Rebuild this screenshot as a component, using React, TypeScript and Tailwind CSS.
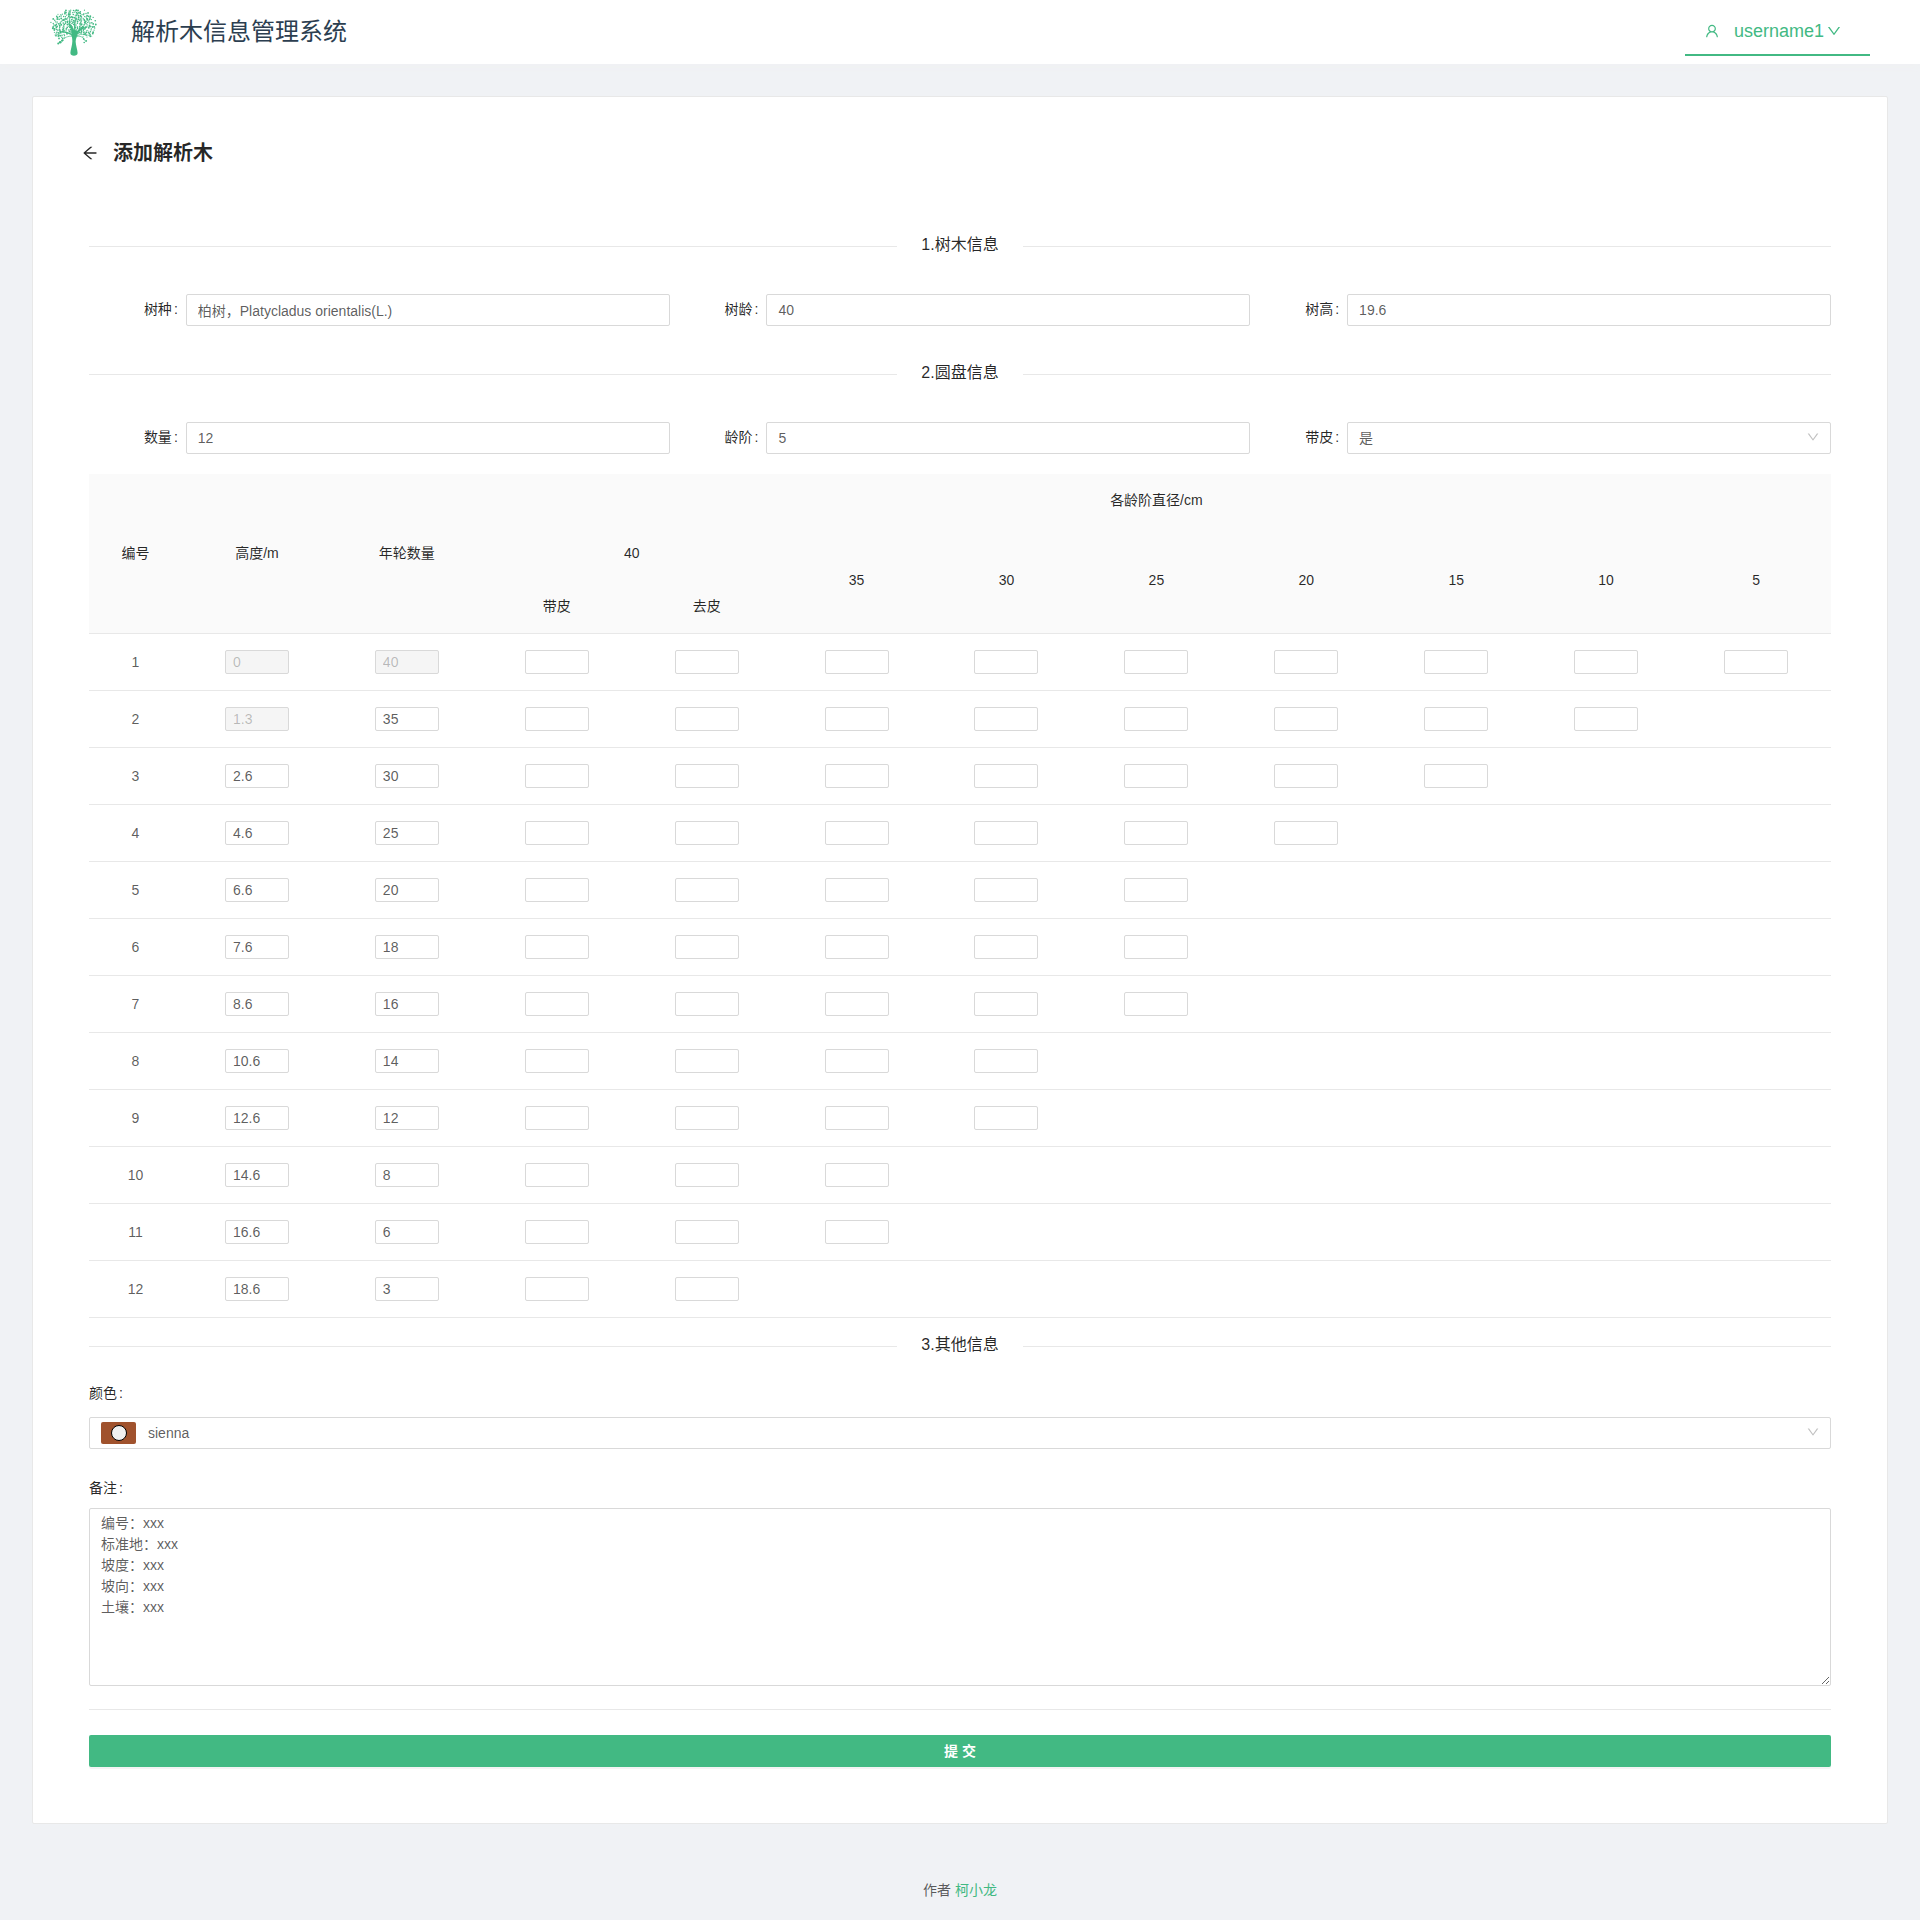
import type { ReactNode } from 'react'
import { AiOutlineArrowLeft, AiOutlineDown, AiOutlineUser } from 'react-icons/ai'

type Leaf = { x: number; y: number; r: number }

function crownLeaves(): Leaf[] {
  const leaves: Leaf[] = []
  const total = 300
  for (let i = 0; i < total; i++) {
    const t = Math.sqrt((i + 0.5) / total)
    const a = i * 2.39996
    const wobble = 1 + 0.07 * Math.sin(i * 7.3)
    const x = 101 + 67 * t * wobble * Math.cos(a)
    const y = 77 + 51 * t * wobble * Math.sin(a)
    const underCrown = y > 103 && Math.abs(x - 101) < 27
    const lowerGap = y > 116 && x > 80 && x < 122
    const outerGap = y > 112 && x > 140
    const openSky = Math.sin(x * 0.31) * Math.cos(y * 0.37) > 0.72
    if (underCrown || lowerGap || outerGap || openSky) continue
    leaves.push({ x, y, r: 1.7 + 1.1 * Math.abs(Math.sin(i * 3.7)) })
  }
  return leaves
}

const LEAVES = crownLeaves()

function TreeLogo() {
  return (
    <svg viewBox="30 22 144 146" className="h-12 w-12 text-[#42b983]" role="img" aria-label="logo">
      <g fill="currentColor">
        {LEAVES.map((l, i) => (
          <circle key={i} cx={l.x} cy={l.y} r={l.r} />
        ))}
        <circle cx="60" cy="126" r="4" />
        <circle cx="54" cy="130" r="3" />
        <circle cx="66" cy="121" r="3.5" />
        <circle cx="133" cy="127" r="2.5" />
        <circle cx="139" cy="122" r="3" />
        <path d="M94 86C92 98 97 110 97 122C97 134 91 150 91 159C91 165 96 167 102 167C108 167 113 165 113 159C113 150 107 134 107 124C107 114 113 104 116 94L104 88Z" />
      </g>
      <g fill="none" stroke="currentColor" strokeLinecap="round">
        <path strokeWidth="6" d="M101 98C98 86 94 80 88 72M106 102C114 92 120 86 130 82" />
        <path strokeWidth="4" d="M104 98C106 84 102 72 106 58M99 108C92 98 80 96 66 94" />
        <path strokeWidth="2" d="M88 72C80 64 74 60 66 58M88 72C92 60 86 50 90 38M106 58C104 48 112 42 112 34M130 82C140 76 148 82 162 78M130 82C130 72 142 64 144 54M66 94C56 92 52 86 40 84M66 94C58 98 54 104 44 104M118 90C116 76 128 66 126 50M96 108C84 106 72 112 62 124M108 110C120 104 130 110 136 122M112 106C126 98 142 104 156 108" />
      </g>
    </svg>
  )
}

function SectionDivider({ children }: { children: ReactNode }) {
  return (
    <div className="flex h-[25px] items-center gap-6 before:h-px before:flex-1 before:bg-[#e8e8e8] after:h-px after:flex-1 after:bg-[#e8e8e8]">
      <h2 className="pb-1 text-base leading-6 font-normal text-black/85">{children}</h2>
    </div>
  )
}

const CONTROL =
  'h-8 w-full rounded-[2px] border border-[#d9d9d9] bg-white px-[11px] text-sm text-black/65 outline-none focus:border-[#42b983]'

function InlineField({ id, label, children }: { id: string; label: string; children: ReactNode }) {
  return (
    <div className="grid grid-cols-[1fr_5fr] items-center">
      <label htmlFor={id} className="pr-2 pb-0.5 text-right text-sm text-black/85">
        {label}
        <span className="pl-0.5">:</span>
      </label>
      <div className="relative">{children}</div>
    </div>
  )
}

function SelectArrow() {
  return <AiOutlineDown size={14} className="pointer-events-none absolute top-2 right-[11px] text-black/25" />
}

const AGES = [35, 30, 25, 20, 15, 10, 5]

const DISC_COLUMNS = ['40带皮', '40去皮', '35', '30', '25', '20', '15', '10', '5']

const DISCS = [
  { height: '0', rings: '40', cells: 9, heightLocked: true, ringsLocked: true },
  { height: '1.3', rings: '35', cells: 8, heightLocked: true },
  { height: '2.6', rings: '30', cells: 7 },
  { height: '4.6', rings: '25', cells: 6 },
  { height: '6.6', rings: '20', cells: 5 },
  { height: '7.6', rings: '18', cells: 5 },
  { height: '8.6', rings: '16', cells: 5 },
  { height: '10.6', rings: '14', cells: 4 },
  { height: '12.6', rings: '12', cells: 4 },
  { height: '14.6', rings: '8', cells: 3 },
  { height: '16.6', rings: '6', cells: 3 },
  { height: '18.6', rings: '3', cells: 2 },
]

function CellInput({ label, value, disabled }: { label: string; value?: string; disabled?: boolean }) {
  return (
    <input
      type="text"
      aria-label={label}
      defaultValue={value}
      disabled={disabled}
      className="mx-auto block h-6 w-16 rounded-[2px] border border-[#d9d9d9] bg-white px-[7px] text-sm text-black/65 outline-none focus:border-[#42b983] disabled:bg-[#f5f5f5] disabled:text-black/25"
    />
  )
}

function DiscTable() {
  return (
    <table className="mt-5 w-full table-fixed border-separate border-spacing-0 text-center text-sm leading-[21px]">
      <colgroup>
        <col className="w-[93px]" />
        <col span={11} />
      </colgroup>
      <thead className="bg-[#fafafa] text-black/85 [&_th]:h-[53px] [&_th]:p-0 [&_th]:font-normal">
        <tr>
          <th rowSpan={3} className="border-b border-[#e8e8e8]">编号</th>
          <th rowSpan={3} className="border-b border-[#e8e8e8]">高度/m</th>
          <th rowSpan={3} className="border-b border-[#e8e8e8]">年轮数量</th>
          <th colSpan={9}>各龄阶直径/cm</th>
        </tr>
        <tr>
          <th colSpan={2}>40</th>
          {AGES.map((age) => (
            <th key={age} rowSpan={2} className="border-b border-[#e8e8e8]">
              {age}
            </th>
          ))}
        </tr>
        <tr className="h-[54px]">
          <th className="border-b border-[#e8e8e8]">带皮</th>
          <th className="border-b border-[#e8e8e8]">去皮</th>
        </tr>
      </thead>
      <tbody className="text-black/65 [&_td]:border-b [&_td]:border-[#e8e8e8] [&_td]:px-0 [&_td]:py-4">
        {DISCS.map((disc, row) => (
          <tr key={row}>
            <td>{row + 1}</td>
            <td>
              <CellInput label={`高度 ${row + 1}`} value={disc.height} disabled={disc.heightLocked} />
            </td>
            <td>
              <CellInput label={`年轮数量 ${row + 1}`} value={disc.rings} disabled={disc.ringsLocked} />
            </td>
            {DISC_COLUMNS.map((name, col) => (
              <td key={name}>{col < disc.cells && <CellInput label={`${name} ${row + 1}`} />}</td>
            ))}
          </tr>
        ))}
      </tbody>
    </table>
  )
}

export default function App() {
  return (
    <div
      lang="zh-CN"
      className="min-h-screen bg-[#f0f2f5] font-['Liberation_Sans','Noto_Sans_CJK_SC',sans-serif] text-sm leading-[21px] text-black/65"
    >
      <header className="flex h-16 items-center bg-white px-[50px] shadow-[0_2px_8px_#f0f1f2]">
        <TreeLogo />
        <h1 className="ml-[33px] text-2xl text-[#2c3e50]">解析木信息管理系统</h1>
        <button
          type="button"
          className="ml-auto flex h-12 w-[185px] items-center border-b-2 border-[#42b983] pl-[19px] text-lg text-[#42b983]"
        >
          <AiOutlineUser size={16} />
          <span className="ml-3.5">username1</span>
          <AiOutlineDown size={16} className="ml-0.5" />
        </button>
      </header>

      <main className="mx-8 mt-8 rounded-[2px] border border-[#e8e8e8] bg-white px-14 pb-14">
        <div className="-ml-2 flex h-[104px] items-center pt-2">
          <button type="button" aria-label="返回" className="text-black/85">
            <AiOutlineArrowLeft size={18} />
          </button>
          <h1 className="ml-3.5 text-xl font-semibold text-black/85">添加解析木</h1>
        </div>

        <form className="mt-[33px]" onSubmit={(e) => e.preventDefault()}>
          <SectionDivider>1.树木信息</SectionDivider>
          <div className="mt-[35px] mb-9 grid grid-cols-3">
            <InlineField id="species" label="树种">
              <input id="species" className={CONTROL} defaultValue="柏树，Platycladus orientalis(L.)" />
            </InlineField>
            <InlineField id="age" label="树龄">
              <input id="age" className={CONTROL} defaultValue="40" />
            </InlineField>
            <InlineField id="height" label="树高">
              <input id="height" className={CONTROL} defaultValue="19.6" />
            </InlineField>
          </div>

          <SectionDivider>2.圆盘信息</SectionDivider>
          <div className="mt-[35px] grid grid-cols-3">
            <InlineField id="count" label="数量">
              <input id="count" className={CONTROL} defaultValue="12" />
            </InlineField>
            <InlineField id="step" label="龄阶">
              <input id="step" className={CONTROL} defaultValue="5" />
            </InlineField>
            <InlineField id="bark" label="带皮">
              <select id="bark" className={`${CONTROL} appearance-none`} defaultValue="是">
                <option>是</option>
                <option>否</option>
              </select>
              <SelectArrow />
            </InlineField>
          </div>

          <DiscTable />

          <div className="mt-4">
            <SectionDivider>3.其他信息</SectionDivider>
          </div>

          <label htmlFor="color" className="mt-6 block text-black/85">
            颜色<span className="pl-0.5">:</span>
          </label>
          <div className="relative mt-[13px]">
            <select id="color" className={`${CONTROL} appearance-none pl-[58px]`} defaultValue="sienna">
              <option>sienna</option>
            </select>
            <span className="pointer-events-none absolute top-[5px] left-3 flex h-[22px] w-[35px] items-center justify-center rounded-[2px] bg-[#a0522d]">
              <span className="h-4 w-4 rounded-full border border-black bg-[#f0f0f0]" />
            </span>
            <SelectArrow />
          </div>

          <label htmlFor="notes" className="mt-[29px] block text-black/85">
            备注<span className="pl-0.5">:</span>
          </label>
          <textarea
            id="notes"
            rows={8}
            className="mt-[9px] block w-full resize rounded-[2px] border border-[#d9d9d9] bg-white px-[11px] py-1 text-sm leading-[21px] text-black/65 outline-none focus:border-[#42b983]"
            defaultValue={'编号：xxx\n标准地：xxx\n坡度：xxx\n坡向：xxx\n土壤：xxx'}
          />

          <hr className="mt-[23px] border-t border-[#e8e8e8]" />
          <button
            type="submit"
            className="mt-[25px] block h-8 w-full rounded-[2px] bg-[#42b983] text-sm font-bold text-white shadow-[0_2px_0_rgba(0,0,0,0.045)]"
          >
            提 交
          </button>
        </form>
      </main>

      <footer className="pt-14 pb-[19px] text-center">
        作者{' '}
        <a href="#author" className="text-[#42b983]">
          柯小龙
        </a>
      </footer>
    </div>
  )
}
